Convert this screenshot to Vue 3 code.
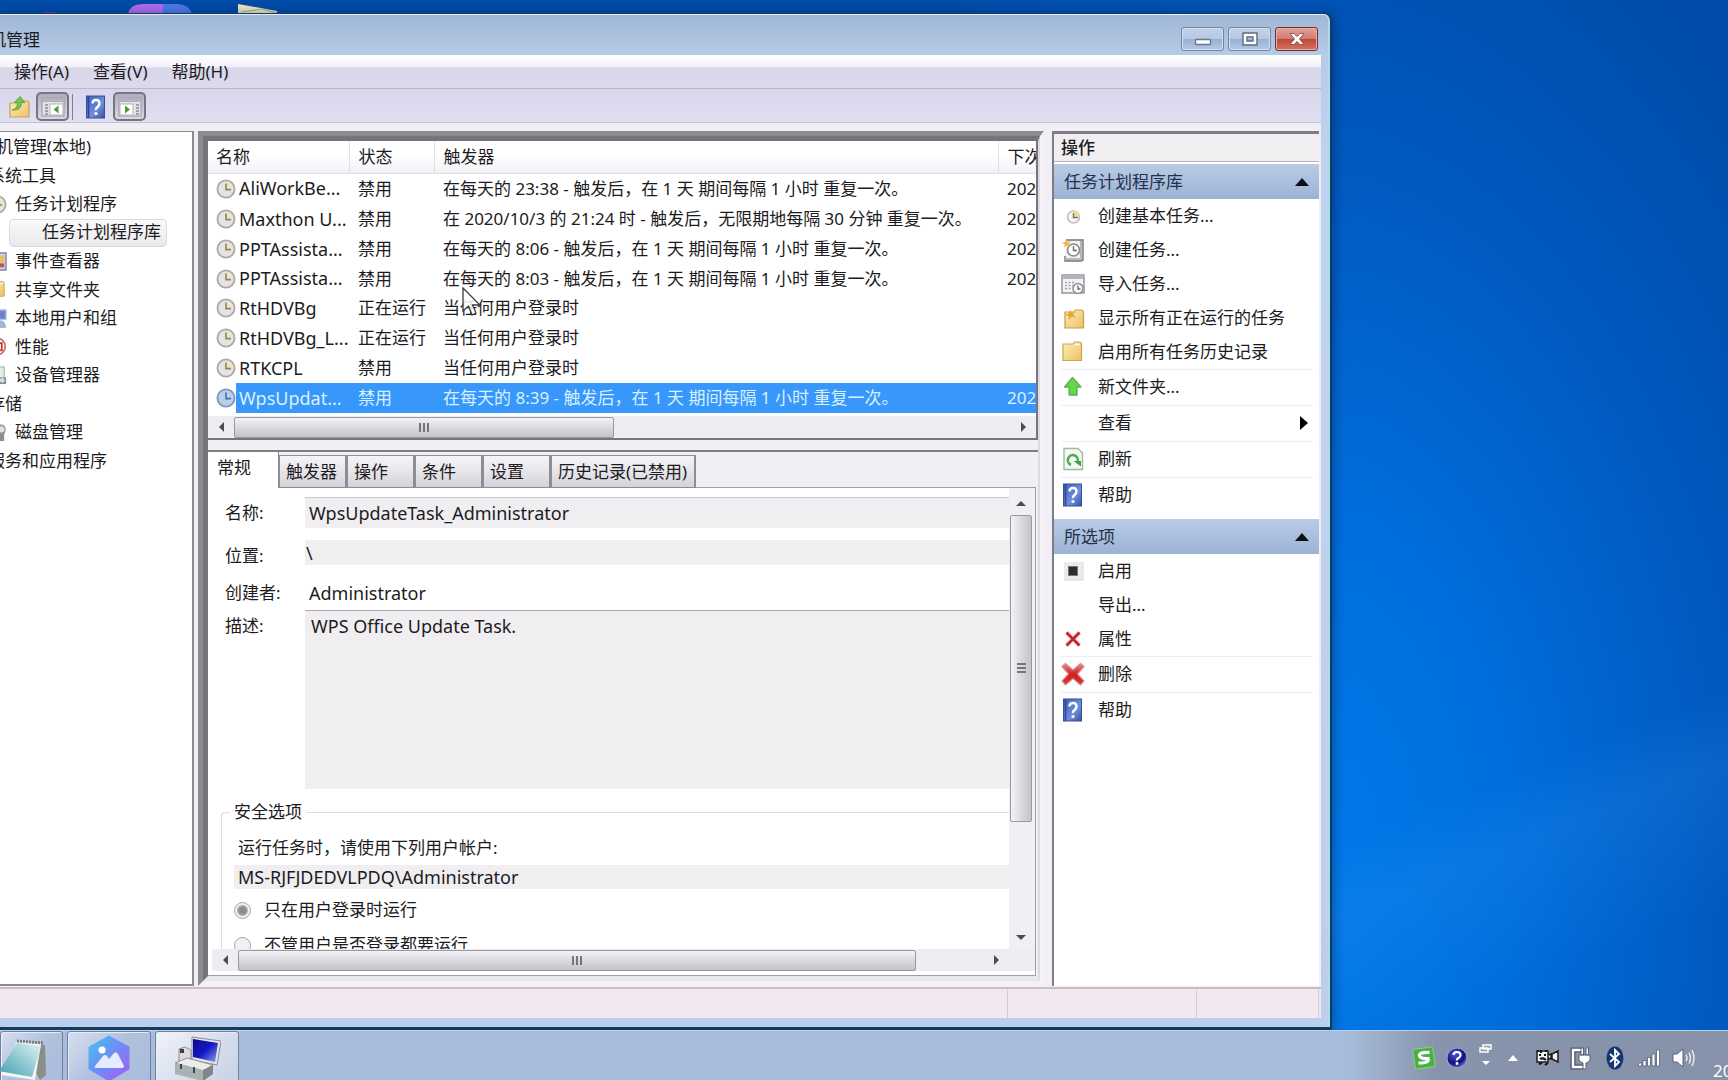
<script setup>
import { ref } from 'vue'

const menus = ['操作(A)', '查看(V)', '帮助(H)']

const tree = [
  { label: '机管理(本地)', level: 'root' },
  { label: '系统工具', level: 'group' },
  { label: '任务计划程序', level: 'leaf', icon: 'clock' },
  { label: '任务计划程序库', level: 'child' },
  { label: '事件查看器', level: 'leaf', icon: 'events' },
  { label: '共享文件夹', level: 'leaf', icon: 'folder' },
  { label: '本地用户和组', level: 'leaf', icon: 'users' },
  { label: '性能', level: 'leaf', icon: 'perf' },
  { label: '设备管理器', level: 'leaf', icon: 'device' },
  { label: '存储', level: 'group' },
  { label: '磁盘管理', level: 'leaf', icon: 'disk' },
  { label: '服务和应用程序', level: 'group' },
]

const tasks = [
  { name: 'AliWorkBe...', state: '禁用', trigger: '在每天的 23:38 - 触发后，在 1 天 期间每隔 1 小时 重复一次。', next: '202' },
  { name: 'Maxthon U...', state: '禁用', trigger: '在 2020/10/3 的 21:24 时 - 触发后，无限期地每隔 30 分钟 重复一次。', next: '202' },
  { name: 'PPTAssista...', state: '禁用', trigger: '在每天的 8:06 - 触发后，在 1 天 期间每隔 1 小时 重复一次。', next: '202' },
  { name: 'PPTAssista...', state: '禁用', trigger: '在每天的 8:03 - 触发后，在 1 天 期间每隔 1 小时 重复一次。', next: '202' },
  { name: 'RtHDVBg', state: '正在运行', trigger: '当任何用户登录时', next: '' },
  { name: 'RtHDVBg_L...', state: '正在运行', trigger: '当任何用户登录时', next: '' },
  { name: 'RTKCPL', state: '禁用', trigger: '当任何用户登录时', next: '' },
  { name: 'WpsUpdat...', state: '禁用', trigger: '在每天的 8:39 - 触发后，在 1 天 期间每隔 1 小时 重复一次。', next: '202' },
]
const selected = ref(7)

const tabs = ['常规', '触发器', '操作', '条件', '设置', '历史记录(已禁用)']
const activeTab = ref(0)
const runMode = ref('logged-on')

const sections = [
  {
    title: '任务计划程序库',
    items: [
      { label: '创建基本任务...', icon: 'clock-small' },
      { label: '创建任务...', icon: 'new-task' },
      { label: '导入任务...', icon: 'import' },
      { label: '显示所有正在运行的任务', icon: 'folder-star' },
      { label: '启用所有任务历史记录', icon: 'folder' },
      { label: '新文件夹...', icon: 'arrow-up', line: true },
      { label: '查看', submenu: true, line: true },
      { label: '刷新', icon: 'refresh', line: true },
      { label: '帮助', icon: 'help', line: true },
    ],
  },
  {
    title: '所选项',
    items: [
      { label: '启用', icon: 'stop' },
      { label: '导出...' },
      { label: '属性', icon: 'cross-small' },
      { label: '删除', icon: 'cross', line: true },
      { label: '帮助', icon: 'help', line: true },
    ],
  },
]
</script>

<template>
  <div class="desktop">
    <svg class="defs" aria-hidden="true">
      <defs>
        <linearGradient id="g-folder" x1="0" y1="0" x2="1" y2="1">
          <stop offset="0" stop-color="#fdeeb8" /><stop offset="1" stop-color="#edc063" />
        </linearGradient>
        <linearGradient id="g-help" x1="0" y1="0" x2="1" y2="1">
          <stop offset="0" stop-color="#3f5fb8" /><stop offset=".6" stop-color="#6f8edb" /><stop offset="1" stop-color="#3450a6" />
        </linearGradient>
        <linearGradient id="g-red" x1="0" y1="0" x2="0" y2="1">
          <stop offset="0" stop-color="#e88d8d" /><stop offset=".5" stop-color="#d01f1f" /><stop offset="1" stop-color="#d23a3a" />
        </linearGradient>
        <linearGradient id="g-hex" x1="0" y1="0" x2="1" y2="1">
          <stop offset="0" stop-color="#45c3f2" /><stop offset=".5" stop-color="#6f8bf5" /><stop offset="1" stop-color="#a95cf5" />
        </linearGradient>
        <linearGradient id="g-screen" x1="0" y1="0" x2="1" y2="1">
          <stop offset="0" stop-color="#0b0b86" /><stop offset=".5" stop-color="#1518c4" /><stop offset="1" stop-color="#8fa2f0" />
        </linearGradient>
        <linearGradient id="g-note" x1="1" y1="0" x2="0" y2="1">
          <stop offset="0" stop-color="#dff3f4" /><stop offset="1" stop-color="#3f9fb0" />
        </linearGradient>
        <radialGradient id="g-orb" cx=".4" cy=".3" r=".8">
          <stop offset="0" stop-color="#4a58d8" /><stop offset=".6" stop-color="#10107e" /><stop offset="1" stop-color="#8fa0e8" />
        </radialGradient>
      </defs>
      <symbol id="i-clock" viewBox="0 0 20 20">
        <circle cx="10" cy="10" r="8.6" fill="#e6e4e0" stroke="#aaa8a8" stroke-width="1.8" />
        <path d="M10 10V3.6A6.4 6.4 0 0 1 16.4 10Z" fill="#f1e6b4" />
        <path d="M10 4.5V10.6H15" fill="none" stroke="#85837a" stroke-width="1.6" />
      </symbol>
      <symbol id="i-clock-blue" viewBox="0 0 20 20">
        <circle cx="10" cy="10" r="8.6" fill="#b5d0f0" stroke="#7f97b8" stroke-width="1.8" />
        <path d="M10 4.5V10.6H15" fill="none" stroke="#4a6f9c" stroke-width="1.6" />
      </symbol>
      <symbol id="i-clock-small" viewBox="0 0 24 24">
        <circle cx="12.500" cy="13" r="6" fill="#f5f4f2" stroke="#bdbcc0" stroke-width="1.5" />
        <path d="M12.500 13V7A6 6 0 0 1 18.500 12Z" fill="#f6dd8c" />
        <path d="M12.500 9V13.500H17" fill="none" stroke="#77767c" stroke-width="1.500" />
      </symbol>
      <symbol id="i-new-task" viewBox="0 0 24 24">
        <path d="M5 2H22V22L20 23H4V18" fill="#f2f1f2" stroke="#77727a" stroke-width="1.400" />
        <path d="M20 3V21H4" fill="none" stroke="#b9b5ba" stroke-width="2" />
        <circle cx="12.500" cy="12" r="6" fill="#fff" stroke="#8b898e" stroke-width="1.700" />
        <path d="M12.500 8V12.500H16" fill="none" stroke="#6c6a6e" stroke-width="1.400" />
        <path d="M5 1L6.300 4 9.500 3 7.500 6 9 9 5.800 7.500 3 9.500 3.500 6.300 0.500 5 4 4.300Z" fill="#f0b94e" />
      </symbol>
      <symbol id="i-import" viewBox="0 0 24 24">
        <rect x="1" y="3" width="22" height="18" fill="#f4f3f5" stroke="#8f8d94" stroke-width="1.400" />
        <rect x="1" y="3" width="22" height="4" fill="#b4b2ba" />
        <path d="M4 10.500H14M4 13.500H12M4 16.500H11" stroke="#a3a1a8" stroke-width="1.600" stroke-dasharray="2 1.500" />
        <circle cx="17" cy="16.500" r="5" fill="#fafafa" stroke="#8e8c93" stroke-width="1.500" />
        <path d="M17 13.500V17H19.500" fill="none" stroke="#66646a" stroke-width="1.300" />
      </symbol>
      <symbol id="i-folder" viewBox="0 0 24 24">
        <path d="M2 4H12L13.500 2H19L20.500 4V20.500H2Z" fill="url(#g-folder)" stroke="#c9a35c" stroke-width="1.200" />
        <path d="M13 4.500H19" stroke="#fff8dc" stroke-width="1.400" />
      </symbol>
      <symbol id="i-folder-star" viewBox="0 0 24 24">
        <path d="M4 6H13L14.500 4H21L22.500 6V22H4Z" fill="url(#g-folder)" stroke="#c99b4a" stroke-width="1.200" />
        <path d="M9 4L10.500 7 14 5.500 12.300 8.800 15 11.500 10.500 10.800 8 14 7.500 10 4 9 7.500 7.500Z" fill="#e9a63a" />
      </symbol>
      <symbol id="i-folder-up" viewBox="0 0 24 24">
        <path d="M3 8H11L13 6H21L22 8V22H3Z" fill="url(#g-folder)" stroke="#c9a35c" stroke-width="1.200" />
        <path d="M5 15Q10.500 14 10.500 7.500H7.500L13 1.500 18 7.500H14.500Q14.500 16 5 15Z" fill="#7cc24e" stroke="#4f9a30" stroke-width=".8" />
      </symbol>
      <symbol id="i-arrow-up" viewBox="0 0 24 24">
        <path d="M11.500 2.500L20 12H16V20H8V12H3.500Z" fill="#62d94c" stroke="#5fae54" stroke-width="1.300" stroke-linejoin="round" />
      </symbol>
      <symbol id="i-refresh" viewBox="0 0 24 24">
        <path d="M3 1.500H17L21.500 6V22.500H3Z" fill="#f6f8f5" stroke="#a5b5a2" stroke-width="1.400" />
        <path d="M10 17.800A5 5 0 1 1 16.500 15" fill="none" stroke="#4dae54" stroke-width="2.600" />
        <path d="M12.500 14H20V19.500Z" fill="#3f9f48" />
      </symbol>
      <symbol id="i-help" viewBox="0 0 24 24">
        <rect x="2.500" y="1" width="18" height="22" fill="url(#g-help)" stroke="#3a4f98" />
        <path d="M4.500 1V23" stroke="#2d4795" stroke-width="1.500" />
        <path d="M8.500 8.500Q8.500 5 12 5T15.500 8.500Q15.500 10.500 13.500 12T12 15" fill="none" stroke="#fff" stroke-width="2.400" />
        <circle cx="12" cy="18.500" r="1.600" fill="#fff" />
      </symbol>
      <symbol id="i-stop" viewBox="0 0 24 24">
        <rect x="3" y="3" width="19" height="18" fill="#ecebec" /><path d="M22 3V21H3" fill="none" stroke="#dad9db" />
        <rect x="7.500" y="7.500" width="9" height="9" fill="#2d2d30" stroke="#77777a" />
      </symbol>
      <symbol id="i-cross-small" viewBox="0 0 24 24">
        <path d="M5.500 5.500L18.500 18.500M18.500 5.500L5.500 18.500" stroke="#f9d6d6" stroke-width="5" />
        <path d="M5.500 5.500L18.500 18.500M18.500 5.500L5.500 18.500" stroke="#c22222" stroke-width="2.500" />
      </symbol>
      <symbol id="i-cross" viewBox="0 0 24 24">
        <path d="M1 4.500L4.500 1.500 12 8 19.500 1.500 23 4.500 16.500 12 23 19 19.500 23 12 16.500 4.500 23 1 19 7.500 12Z" fill="url(#g-red)" stroke="#d98a8a" stroke-width="1.200" />
      </symbol>
      <symbol id="i-events" viewBox="0 0 20 20">
        <rect x="1" y="1" width="18" height="18" fill="#cfcde0" stroke="#8483a0" stroke-width="1.500" />
        <rect x="12" y="4" width="5" height="7" fill="#e3c35a" /><rect x="12" y="12" width="5" height="4" fill="#c65050" />
      </symbol>
      <symbol id="i-users" viewBox="0 0 20 20">
        <rect x="5" y="1" width="14" height="10" fill="#6f7fd0" stroke="#b6bedb" stroke-width="1.500" />
        <path d="M8 20Q9 11 14 12T19 20Z" fill="#9fb8d8" />
      </symbol>
      <symbol id="i-perf" viewBox="0 0 20 20">
        <circle cx="9.500" cy="10" r="8.600" fill="#fff" stroke="#c86a6a" stroke-width="1.800" />
        <path d="M8 6.500H14.500V14H8" fill="none" stroke="#d03030" stroke-width="1.800" />
      </symbol>
      <symbol id="i-device" viewBox="0 0 20 20">
        <rect x="8" y="1" width="9" height="12" fill="#e6ebe8" stroke="#9aa8a0" />
        <rect x="4" y="12" width="15" height="7" fill="#7f8f9c" /><circle cx="15" cy="15" r="2.500" fill="#d6dde0" />
      </symbol>
      <symbol id="i-disk" viewBox="0 0 20 20">
        <rect x="4" y="2" width="14" height="10" rx="4" fill="#b9b9ba" stroke="#8b8b8d" />
        <rect x="8" y="9" width="9" height="10" fill="#8e8e90" /><circle cx="14" cy="7" r="3" fill="#e2e2e2" />
      </symbol>
      <symbol id="i-pane-left" viewBox="0 0 24 20">
        <rect x="1" y="1" width="22" height="18" fill="#e3e2e8" stroke="#9a98a4" />
        <rect x="1" y="1" width="22" height="4" fill="#b3b2be" />
        <path d="M4 8H7M4 11H7M4 14H7M4 17H7" stroke="#8a8a96" stroke-width="1.300" />
        <rect x="9" y="7" width="13" height="11" fill="#fff" stroke="#b5b4bd" />
        <path d="M17.500 8.500V16.500L12.500 12.500Z" fill="#4c9a3f" />
      </symbol>
      <symbol id="i-pane-right" viewBox="0 0 24 20">
        <rect x="1" y="1" width="22" height="18" fill="#e3e2e8" stroke="#9a98a4" />
        <rect x="1" y="1" width="22" height="4" fill="#b3b2be" />
        <path d="M18 8H21M18 11H21M18 14H21M18 17H21" stroke="#8a8a96" stroke-width="1.300" />
        <rect x="2" y="7" width="13" height="11" fill="#fff" stroke="#b5b4bd" />
        <path d="M7 8.500V16.500L12 12.500Z" fill="#4c9a3f" />
      </symbol>
    </svg>

    <div class="peek" aria-hidden="true">
      <svg class="peek-icons" width="290" height="14" viewBox="0 0 290 14">
        <path d="M38 14Q50 10 62 14Z" fill="#a83a7a" />
        <path d="M128 14Q130 4 142 4H164V14Z" fill="#b06cf0" /><path d="M163 14V4H178Q190 5 192 14Z" fill="#4f7ae8" />
        <path d="M238 4L277 11V14H238Z" fill="#efe9c0" /><path d="M242 12L262 9 277 13" fill="none" stroke="#a6b58a" />
      </svg>
    </div>

    <main class="window">
      <header class="titlebar">
        <h1 class="title">机管理</h1>
        <div class="caption-buttons">
          <button class="cap" type="button" aria-label="最小化">
            <svg width="18" height="14" viewBox="0 0 18 14"><rect x="1.500" y="7.500" width="15" height="5" rx="1" fill="#fff" stroke="#68788f" stroke-width="1.400" /></svg>
          </button>
          <button class="cap" type="button" aria-label="最大化">
            <svg width="18" height="14" viewBox="0 0 18 14"><path d="M2 1H16V13H2ZM6 5V9H12V5Z" fill="#fff" fill-rule="evenodd" stroke="#5b6b82" stroke-width="1.400" /></svg>
          </button>
          <button class="cap close" type="button" aria-label="关闭">
            <svg width="18" height="14" viewBox="0 0 18 14"><path d="M2 1.500H6L9 4.500 12 1.500H16L11.500 7 16 12.500H12L9 9.500 6 12.500H2L6.500 7Z" fill="#fff" stroke="#8a5a60" /></svg>
          </button>
        </div>
      </header>

      <div class="client">
        <nav class="menubar">
          <button v-for="m in menus" :key="m" class="menu" type="button">{{ m }}</button>
        </nav>
        <div class="toolbar">
          <button class="tool" type="button" aria-label="上移"><svg width="24" height="24"><use href="#i-folder-up" /></svg></button>
          <button class="tool pressed" type="button" aria-label="控制台树"><svg width="24" height="20"><use href="#i-pane-left" /></svg></button>
          <span class="tool-sep"></span>
          <button class="tool" type="button" aria-label="帮助"><svg width="24" height="24"><use href="#i-help" /></svg></button>
          <button class="tool pressed" type="button" aria-label="操作窗格"><svg width="24" height="20"><use href="#i-pane-right" /></svg></button>
        </div>

        <div class="panes">
          <ul class="tree">
            <li v-for="node in tree" :key="node.label" class="node" :class="node.level">
              <svg v-if="node.icon" class="node-icon" width="19" height="19"><use :href="'#i-' + node.icon" /></svg>
              <span class="node-label">{{ node.label }}</span>
            </li>
          </ul>

          <div class="center">
            <div class="center-inner">
              <section class="list">
                <table>
                  <colgroup>
                    <col class="c-name" /><col class="c-state" /><col class="c-trigger" /><col />
                  </colgroup>
                  <thead>
                    <tr><th>名称</th><th>状态</th><th>触发器</th><th>下次</th></tr>
                  </thead>
                  <tbody>
                    <tr v-for="(t, i) in tasks" :key="i" :class="{ selected: i === selected }" @click="selected = i">
                      <td>
                        <div class="task-name">
                          <svg width="20" height="20"><use :href="i === selected ? '#i-clock-blue' : '#i-clock'" /></svg>
                          <span>{{ t.name }}</span>
                        </div>
                      </td>
                      <td>{{ t.state }}</td>
                      <td>{{ t.trigger }}</td>
                      <td>{{ t.next }}</td>
                    </tr>
                  </tbody>
                </table>
                <div class="hscroll">
                  <span class="arrow left"></span>
                  <div class="track"><div class="thumb list-thumb"><span class="grip"></span></div></div>
                  <span class="arrow right"></span>
                </div>
              </section>

              <section class="details">
                <div class="tabs" role="tablist">
                  <button
                    v-for="(t, i) in tabs" :key="t" class="tab" :class="{ active: i === activeTab }"
                    type="button" role="tab" :aria-selected="i === activeTab" @click="activeTab = i"
                  >{{ t }}</button>
                </div>
                <div class="page">
                  <div class="page-row">
                    <form class="form" @submit.prevent>
                      <div class="fields">
                        <label for="f-name">名称:</label>
                        <input id="f-name" class="boxed" type="text" readonly value="WpsUpdateTask_Administrator" />
                        <label for="f-path">位置:</label>
                        <input id="f-path" class="path" type="text" readonly value="\" />
                        <label for="f-author">创建者:</label>
                        <input id="f-author" class="plain" type="text" readonly value="Administrator" />
                        <label for="f-desc">描述:</label>
                        <textarea id="f-desc" readonly>WPS Office Update Task.</textarea>
                      </div>
                      <fieldset>
                        <legend>安全选项</legend>
                        <label class="account-label" for="f-account">运行任务时，请使用下列用户帐户:</label>
                        <input id="f-account" class="account" type="text" readonly value="MS-RJFJDEDVLPDQ\Administrator" />
                        <label class="radio"><input v-model="runMode" type="radio" name="run" value="logged-on" />只在用户登录时运行</label>
                        <label class="radio"><input v-model="runMode" type="radio" name="run" value="always" />不管用户是否登录都要运行</label>
                      </fieldset>
                    </form>
                    <div class="vscroll">
                      <span class="arrow up"></span>
                      <div class="vtrack"><div class="vthumb"><span class="grip turned"></span></div></div>
                      <span class="arrow down"></span>
                    </div>
                  </div>
                  <div class="hscroll page-scroll">
                    <span class="arrow left"></span>
                    <div class="track"><div class="thumb page-thumb"><span class="grip"></span></div></div>
                    <span class="arrow right"></span>
                  </div>
                </div>
              </section>
            </div>
          </div>

          <aside class="actions">
            <h2>操作</h2>
            <section v-for="s in sections" :key="s.title" class="action-group">
              <h3>{{ s.title }}<span class="collapse"></span></h3>
              <button v-for="(a, i) in s.items" :key="i" class="action" :class="{ line: a.line }" type="button">
                <span class="action-icon"><svg v-if="a.icon" width="24" height="24"><use :href="'#i-' + a.icon" /></svg></span>
                <span class="action-label">{{ a.label }}</span>
                <span v-if="a.submenu" class="submenu"></span>
              </button>
            </section>
          </aside>
        </div>

        <footer class="status"><span class="s-main"></span><span class="s-mid"></span><span class="s-end"></span></footer>
      </div>
    </main>

    <footer class="taskbar">
      <div class="apps">
        <button class="app first" type="button" aria-label="记事本">
          <svg width="48" height="46" viewBox="0 0 48 46">
            <path d="M20 8L46 10 47 40 41 45Z" fill="#8a8f86" /><path d="M18 6L42 9 36 45 2 40Z" fill="#f3f6f2" />
            <path d="M18 8L42 11 33 42 0 36Z" fill="url(#g-note)" /><path d="M18 6L44 8" stroke="#7a7d78" stroke-width="3" stroke-dasharray="2 1" />
          </svg>
        </button>
        <button class="app" type="button" aria-label="图片">
          <svg width="44" height="46" viewBox="0 0 44 46">
            <path d="M22 1L42 12V34L22 46 2 34V12Z" fill="url(#g-hex)" stroke="url(#g-hex)" stroke-linejoin="round" />
            <circle cx="15" cy="15" r="3.500" fill="#fff" />
            <path d="M8 31L16 21Q18 19 20 21L22 24 27 18Q29 16 31 19L37 31Q37 33 35 33H10Q7 33 8 31Z" fill="#e6ecff" />
          </svg>
        </button>
        <button class="app current" type="button" aria-label="计算机管理">
          <svg width="48" height="46" viewBox="0 0 48 46">
            <path d="M19 2L48 6 44 30 19 25Z" fill="#e3e4ea" stroke="#8b8c96" /><path d="M20 4L45 8 42 27 20 22Z" fill="url(#g-screen)" />
            <path d="M6 14L12 12 18 15V28H6Z" fill="#dcdcda" stroke="#8c8c88" /><path d="M7 14H11V18H7Z" fill="#3c3c3c" />
            <path d="M2 28L14 23 40 30 30 36Z" fill="#ececec" stroke="#8e9292" /><path d="M2 28L30 35V46L2 39Z" fill="#aab1b2" /><path d="M30 35L40 30V39L30 46Z" fill="#7f8688" />
            <path d="M8 29V34M21 32V38" stroke="#3f4445" stroke-width="2" />
          </svg>
        </button>
      </div>
      <div class="tray">
        <svg width="24" height="24" viewBox="0 0 24 24">
          <rect x="2" y="2" width="20" height="20" rx="2" fill="#4bb043" stroke="#8ccf84" transform="rotate(-8 12 12)" />
          <path d="M17.500 6.500Q7 6 7.500 9.500T16 12.500Q18 17 6.500 17" fill="none" stroke="#fff" stroke-width="3.200" />
        </svg>
        <svg width="22" height="22" viewBox="0 0 22 22">
          <circle cx="11" cy="11" r="10" fill="url(#g-orb)" stroke="#98a6da" />
          <path d="M7.500 8Q7.500 5 11 5T14.500 8Q14.500 10 12.500 11T11 13.500" fill="none" stroke="#fff" stroke-width="2.200" /><circle cx="11" cy="16.500" r="1.400" fill="#fff" />
        </svg>
        <svg width="16" height="28" viewBox="0 0 16 28">
          <path d="M5 1H13V5H5ZM2 4H10V8H2Z" fill="#8b98b0" stroke="#fff" stroke-width="1.500" /><path d="M4 17H12L8 21Z" fill="#fff" />
        </svg>
        <svg class="more" width="18" height="10" viewBox="0 0 18 10"><path d="M9 2L14 8H4Z" fill="#fff" /></svg>
        <svg width="24" height="22" viewBox="0 0 24 22">
          <path d="M2 4H13V15H2ZM13 8L16 7V12L13 11ZM17 7L23 4V15L17 12Z" fill="#f2f2f2" stroke="#1c1c1c" stroke-width="1.500" />
          <path d="M3 3V5M6 3V6M11 3V5M4 8H6M9 8H11M5 12Q8 10 11 13M4 17L7 16M10 18L13 16" stroke="#111" stroke-width="2" />
        </svg>
        <svg width="24" height="24" viewBox="0 0 24 24">
          <path d="M12 4H4V21H14" fill="none" stroke="#4f596c" stroke-width="5" /><path d="M12 4H4V21H14" fill="none" stroke="#fff" stroke-width="2.400" />
          <path d="M10 9H21V14Q19 17 17 17V23H14V17Q11 16 10 14ZM12 2H14.500V9H12ZM17 2H19.500V9H17Z" fill="#fff" stroke="#4f596c" stroke-width=".9" />
        </svg>
        <svg width="24" height="24" viewBox="0 0 24 24">
          <ellipse cx="12" cy="12" rx="8.500" ry="11.500" fill="#14356f" />
          <path d="M7 8L16 16 12 20V4L16 8 7 16" fill="none" stroke="#fff" stroke-width="1.800" />
        </svg>
        <svg width="24" height="20" viewBox="0 0 24 20">
          <path d="M1.500 15H4.500V18H1.500ZM6 12.500H9V18H6ZM10.500 9.500H13.500V18H10.500ZM15 6H18V18H15ZM19.500 2H22.500V18H19.500Z" fill="#fff" stroke="#566074" stroke-width=".8" />
        </svg>
        <svg width="24" height="22" viewBox="0 0 24 22">
          <path d="M2 7H6L12 2V20L6 15H2Z" fill="#fff" stroke="#566074" />
          <path d="M15 8Q17 11 15 14M18 5.500Q21 11 18 16.500M21 3Q25 11 21 19" fill="none" stroke="#e8edf5" stroke-width="1.500" />
        </svg>
        <time class="date">20</time>
      </div>
    </footer>

    <svg class="cursor" width="22" height="32" viewBox="0 0 22 32" aria-hidden="true">
      <path d="M1 1V24L6.500 19 10 28 14 26 10.500 18H18Z" fill="#fff" fill-opacity=".85" stroke="#3a3a46" stroke-width="1.300" />
    </svg>
  </div>
</template>

<style>
html, body, #app { height: 100%; }
body { margin: 0; }
</style>

<style scoped>
.desktop {
  position: relative;
  display: flex;
  flex-direction: column;
  height: 100vh;
  overflow: hidden;
  box-sizing: border-box;
  background:
    linear-gradient(158deg, transparent 78%, rgba(80, 170, 255, .12) 82%, transparent 90%),
    radial-gradient(640px 1060px at 75% 80%, #007bec 0%, #006ddc 35%, #0058bd 70%, #004ca8 100%);
  color: #1d1b22;
  font-family: "Noto Sans", "Noto Sans CJK SC", sans-serif;
  font-size: 17px;
  line-height: 24px;
}
.desktop *, .desktop *::before, .desktop *::after { box-sizing: border-box; }
button, input, textarea { font: inherit; color: inherit; border: 0; margin: 0; padding: 0; background: none; border-radius: 0; outline: 0; }
h1, h2, h3 { margin: 0; font-size: 17px; font-weight: 400; }
svg { display: block; flex: none; }
.defs { position: absolute; width: 0; height: 0; }

.peek { height: 13px; flex: none; }
.peek-icons { overflow: hidden; }

/* window frame */
.window {
  flex: 1;
  min-height: 0;
  display: flex;
  flex-direction: column;
  width: calc(100% - 396px);
  padding: 0 9px 9px 0;
  border: solid #143a5c;
  border-width: 1px 2px 3px 0;
  border-radius: 0 8px 0 0;
  background: linear-gradient(#9fb6d4, #b6cbe8 42px, #bfd4ef 160px, #bccfea);
  box-shadow: inset 0 1px #e4eefa, inset -2px 0 #a8dcf5, 2px 0 12px rgba(0, 20, 60, .4);
}
.titlebar { flex: none; display: flex; align-items: center; justify-content: space-between; height: 41px; padding-top: 10px; }
.title { margin-left: -11px; }
.caption-buttons { display: flex; gap: 4px; padding: 0 3px 2px 0; }
.cap {
  display: flex; align-items: center; justify-content: center;
  width: 43px; height: 24px;
  border: 1px solid #6f84a6; border-radius: 3px;
  background: linear-gradient(#c3d3e9, #b5c8e3 50%, #98afd0 50%, #b4c9e6);
  box-shadow: inset 0 0 0 1px #d3e0f1;
}
.cap.close { border-color: #6b2f3a; background: linear-gradient(#e2a299, #d3796c 50%, #bd4636 50%, #d47560); box-shadow: inset 0 0 0 1px #e9b1a8; }

.client { flex: 1; min-height: 0; display: flex; flex-direction: column; background: #f1eff5; }
.menubar {
  flex: none; display: flex; gap: 24px; align-items: center;
  height: 34px; padding-left: 14px;
  background: linear-gradient(#fff, #f1f0fa 12px, #d9d6ea 13px, #dbd9ec);
  border-bottom: 1px solid #bcb7cc;
}
.toolbar { flex: none; display: flex; align-items: center; height: 34px; padding: 2px 0 0 7px; border-bottom: 1px solid #c4c1d6; background: linear-gradient(#d8d6ea, #e1dff2); }
.tool { display: flex; align-items: center; justify-content: center; width: 24px; height: 30px; }
.tool.pressed { width: 33px; height: 29px; margin: 0 3px 0 5px; border: 2px solid #77757f; border-radius: 5px; background: linear-gradient(#b1afbd, #dad8e4); }
.tool-sep { width: 1px; height: 26px; margin-right: 11px; background: #83818e; }

.panes { flex: 1; min-height: 0; display: flex; padding: 8px 2px 1px 0; }

/* console tree */
.tree {
  width: 194px; margin: 0 4px 0 0; padding: 1px 0 0; list-style: none; overflow: hidden;
  border: solid #8b8a90; border-width: 1px 2px 2px 0; background: #fff;
}
.node { display: flex; align-items: center; gap: 8px; height: 28px; white-space: nowrap; }
.node:nth-child(even) { height: 29px; }
.node.root { margin-left: -4px; }
.node.group, .node.leaf { margin-left: -12px; }
.node.child .node-label {
  width: 158px; height: 28px; margin-left: 9px; padding: 0 0 0 32px; border: 1px solid #dcdae0; border-radius: 4px;
  background: linear-gradient(#fafafa, #e9e8ec);
}

/* sunken center frame */
.center { flex: 1; min-width: 0; display: flex; border: solid; border-width: 5px 4px 5px 5px; border-color: #8c8b8e #f3f1f6 #f3f1f6 #8c8b8e; }
.center-inner { flex: 1; min-width: 0; display: flex; flex-direction: column; border: solid; border-width: 5px 2px 5px 5px; border-color: #757477 #dddbe1 #e9e7ee #757477; background: #f1eff4; }

.list { flex: none; background: #fff; border: solid #78767c; border-width: 0 2px 2px 0; }
table { width: 100%; table-layout: fixed; border-collapse: collapse; margin-bottom: 3px; }
.c-name { width: 141px; }
.c-state { width: 85px; }
.c-trigger { width: 564px; }
th { height: 32px; padding: 0 0 0 9px; text-align: left; font-weight: 400; background: linear-gradient(#fff 40%, #f3f1f6); border: solid #e2e0e6; border-width: 0 0 1px 1px; white-space: nowrap; overflow: hidden; }
th:first-child { border-left: 0; padding-left: 8px; }
td { height: 30px; padding: 0 0 0 9px; white-space: nowrap; overflow: hidden; }
td:first-child { padding: 0; font-size: 18px; }
tbody tr:first-child td { height: 31px; }
tbody tr:nth-child(4) td { height: 29px; }
.task-name { display: flex; align-items: center; padding-left: 8px; }
.task-name span { flex: 1; line-height: 29px; padding-left: 3px; }
.selected td:not(:first-child), .selected .task-name span { background: #3897fb; color: #d9f1ff; }
.selected .task-name span { line-height: 30px; }

/* scrollbars */
.hscroll { flex: none; display: flex; align-items: center; height: 22px; background: #efedf1; }
.track { flex: 1; height: 21px; }
.thumb { display: flex; align-items: center; justify-content: center; height: 21px; border: 1px solid #9a989f; border-radius: 2px; background: linear-gradient(#f4f3f6, #dddce1 45%, #c5c3ca); }
.list-thumb { width: 49%; }
.page-thumb { width: 91%; }
.grip { width: 10px; height: 9px; background: repeating-linear-gradient(90deg, #77757c 0 2px, transparent 2px 4px); }
.grip.turned { width: 9px; height: 10px; background: repeating-linear-gradient(#77757c 0 2px, transparent 2px 4px); }
.arrow { flex: none; width: 26px; display: flex; justify-content: center; }
.arrow::before { content: ""; border: 5px solid transparent; }
.arrow.left::before { border-right-color: #4c4a52; border-left-width: 0; }
.arrow.right::before { border-left-color: #4c4a52; border-right-width: 0; }
.arrow.up::before { border-bottom-color: #4c4a52; border-top-width: 0; }
.arrow.down::before { border-top-color: #4c4a52; border-bottom-width: 0; }

/* details */
.details { flex: 1; min-height: 0; display: flex; flex-direction: column; margin-top: 10px; border-top: 2px solid #7f7d83; }
.tabs { flex: none; display: flex; align-items: flex-end; height: 36px; padding-right: 2px; }
.tabs::after { content: ""; flex: 1; height: 1px; background: #a19fa6; }
.tab { width: 68px; height: 33px; padding: 0 0 0 6px; text-align: left; white-space: nowrap; border: solid #8f8d94; border-width: 1px 2px 1px 1px; background: linear-gradient(#f5f4f7, #e6e5e9 50%, #d5d3d9); }
.tab.active { width: 71px; height: 36px; padding: 0 0 4px 9px; border-width: 0 1px 0 0; background: #fff; }
.tab:last-child { width: 145px; }
.page { flex: 1; min-height: 0; display: flex; flex-direction: column; margin-right: 2px; padding-bottom: 4px; border: solid #a19fa6; border-width: 0 1px 1px 0; background: #fff; }
.page-row { flex: 1; min-height: 0; display: flex; }
.form { flex: 1; min-width: 0; overflow: hidden; padding-top: 9px; }
.fields { display: grid; grid-template-columns: 80px 1fr; grid-template-rows: 43px 37px 33px 179px; align-items: start; padding-left: 17px; }
.fields label { line-height: 32px; }
.fields input, .fields textarea { width: 100%; height: 31px; background: #f0eef1; padding: 0 4px; font-size: 18px; }
.fields .boxed { border-top: 1px solid #c9c7ce; }
.fields .path { height: 25px; padding: 0 0 0 1px; }
.fields .plain { background: none; }
.fields textarea { display: block; height: 179px; padding: 3px 6px; border-top: 1px solid #aeacb3; resize: none; }
fieldset { margin: 11px 0 0 13px; padding: 0; border: 1px solid #dddbe1; border-right: 0; border-radius: 4px 0 0; min-width: 0; }
legend { margin-left: 8px; padding: 0 4px; height: 24px; }
.account-label { display: block; margin: 11px 0 4px 16px; line-height: 26px; }
.account { display: block; width: calc(100% - 12px); height: 24px; margin-left: 12px; padding-left: 4px; background: #f0eef1; font-size: 18px; }
.radio { display: flex; align-items: center; gap: 13px; height: 24px; margin: 9px 0 11px 12px; }
.radio input {
  appearance: none; width: 17px; height: 17px; border: 1px solid #a5a3a8; border-radius: 50%; background: #f1f0f2;
}
.radio input:checked { background: radial-gradient(#8b8a8e 0 3px, #b2b1b5 5px, #f1f0f2 6px); }
.vscroll { width: 26px; display: flex; flex-direction: column; background: #f1eff3; align-items: center; padding: 13px 2px 9px 0; }
.vtrack { flex: 1; width: 22px; padding-top: 9px; }
.vthumb { width: 22px; height: 73%; display: flex; align-items: center; justify-content: center; border: 1px solid #9a989f; border-radius: 2px; background: linear-gradient(90deg, #f4f3f6, #dddce1 45%, #c5c3ca); }
.page-scroll { margin: 0 0 0 4px; padding-right: 26px; }

/* actions pane */
.actions { width: 267px; margin-left: 8px; border: solid #7f7d83; border-width: 3px 0 0 2px; background: #fff; overflow: hidden; }
.actions h2 { height: 28px; padding: 2px 0 0 7px; background: #f0eef1; border-bottom: 1px solid #b5b3b9; font-weight: 500; margin-bottom: 2px; }
.action-group { display: flex; flex-direction: column; margin-bottom: 6px; }
.action-group h3 { display: flex; align-items: center; justify-content: space-between; height: 35px; padding: 0 10px; background: linear-gradient(#bccbe6, #a9bfde 50%, #9db2d2); color: #26304a; }
.collapse { border: solid transparent; border-width: 0 7px 8px; border-bottom-color: #0d0d18; }
.action { display: flex; align-items: center; height: 34px; margin: 0 6px 0 7px; text-align: left; }
.action.line { height: 36px; padding-bottom: 1px; border-top: 1px solid #efedf1; }
.action-icon { width: 24px; margin-right: 13px; }
.action-label { flex: 1; }
.submenu { margin-right: 5px; border: solid transparent; border-width: 7px 0 7px 8px; border-left-color: #000; }

.status { flex: none; display: flex; height: 31px; border-top: 2px solid #c3c0c8; background: #f3e8ef; }
.s-main { flex: 1; border-right: 1px solid #d6ccd5; }
.s-mid { width: 189px; border-right: 1px solid #d6ccd5; }
.s-end { width: 122px; border-right: 1px solid #d6ccd5; margin-right: 2px; }

/* taskbar */
.taskbar {
  flex: none; display: flex; justify-content: space-between; height: 50px; overflow: hidden;
  border-top: 1px solid #b9d2ee;
  background: linear-gradient(90deg, #a7bcda 0, #a7bcda 78%, #8794ac 83%, #8592aa);
}
.apps { display: flex; gap: 4px; }
.app { display: flex; align-items: flex-start; justify-content: center; width: 84px; height: 52px; padding-top: 3px; border: 1px solid #6f819f; border-radius: 3px; background: linear-gradient(135deg, #d6dff0, #b0c1dd 50%, #a9bcdb); box-shadow: inset 1px 1px #e8eef8; }
.app.first { width: 63px; padding-right: 18px; }
.app.current { background: linear-gradient(135deg, #f1f3fa, #d5dcec 60%, #c8d2e6); }
.tray { display: flex; align-items: center; gap: 10px; padding-top: 4px; }
.more { margin-right: 3px; }
.date { align-self: flex-end; width: 15px; margin-left: 8px; overflow: hidden; color: #fff; height: 21px; }

.cursor { position: absolute; left: 462px; top: 287px; }
</style>
